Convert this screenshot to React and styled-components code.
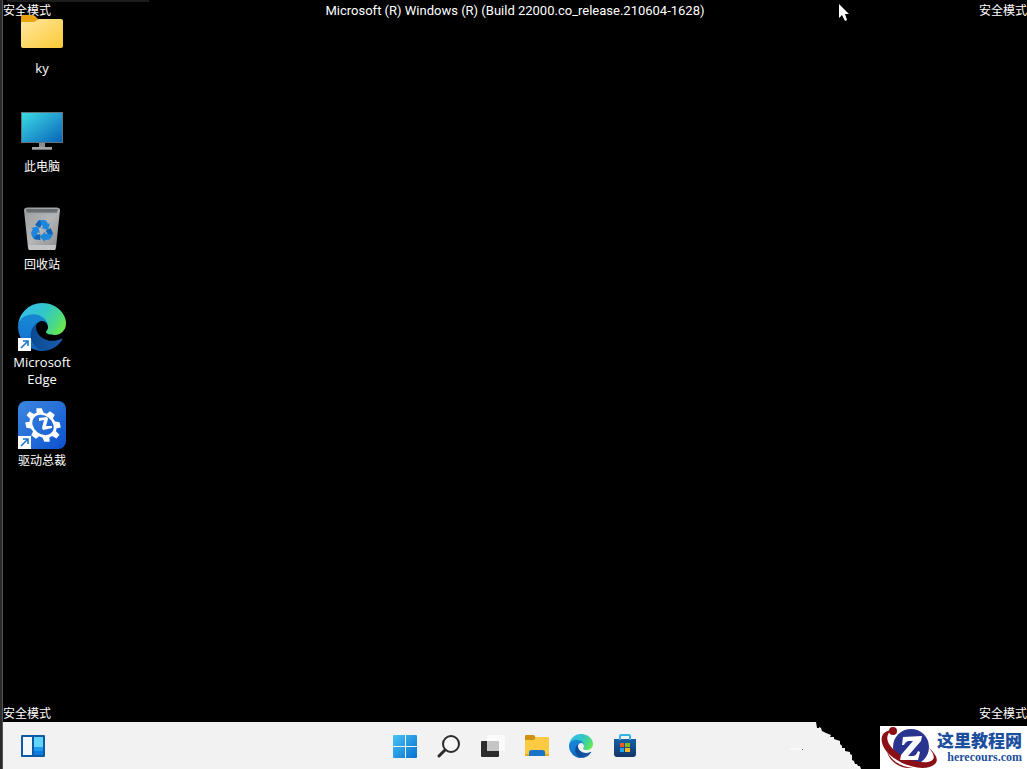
import React, { useId } from "react";
import styled, { createGlobalStyle } from "styled-components";

export default function App() {
  return (
    <>
      <GlobalStyle />
      <Screen>
        <Desktop>
          <TopStrip />
          <Watermark $top $left>安全模式</Watermark>
          <BuildInfo>Microsoft (R) Windows (R) (Build 22000.co_release.210604-1628)</BuildInfo>
          <Watermark $top>安全模式</Watermark>
          <Watermark $left>安全模式</Watermark>
          <Watermark>安全模式</Watermark>
          <ShortcutGrid>
            {shortcuts.map(({ name, Icon, linked, latin }) => (
              <Shortcut key={name} type="button">
                <IconBox>
                  <Icon />
                  {linked && <ShortcutArrow />}
                </IconBox>
                <ShortcutLabel $latin={latin}>{name}</ShortcutLabel>
              </Shortcut>
            ))}
          </ShortcutGrid>
          <Pointer />
        </Desktop>
        <Taskbar>
          <TaskbarStart>
            <TaskButton type="button" aria-label="Widgets"><WidgetsIcon /></TaskButton>
          </TaskbarStart>
          <TaskbarApps>
            {apps.map(({ name, Icon }) => (
              <TaskButton key={name} type="button" aria-label={name}><Icon /></TaskButton>
            ))}
          </TaskbarApps>
          <TaskbarEnd>
            <Speck />
            <TornEdge />
            <BrandArea>
              <Brand href="#">
                <BrandLogo />
                <BrandText>
                  <BrandName>这里教程网</BrandName>
                  <BrandDomain>herecours.com</BrandDomain>
                </BrandText>
              </Brand>
            </BrandArea>
          </TaskbarEnd>
        </Taskbar>
      </Screen>
    </>
  );
}

/* Icons */

function FolderIcon() {
  return (
    <svg width="48" height="48" viewBox="0 0 48 48" aria-hidden="true">
      <defs>
        <linearGradient id="folder" x1="0" y1="0" x2="1" y2="1">
          <stop offset="0" stopColor="#ffe8a0" />
          <stop offset="1" stopColor="#fbc936" />
        </linearGradient>
      </defs>
      <path d="M3 13V8q0-2 2-2h9q2 0 3 1l3 3v6H3z" fill="#e9a410" />
      <path d="M3 14q0-1 1-1h11q2 0 3-1l1-1q1-1 2-1h22q2 0 2 2v25q0 2-2 2H5q-2 0-2-2z" fill="url(#folder)" />
    </svg>
  );
}

function ComputerIcon() {
  return (
    <svg width="48" height="48" viewBox="0 0 48 48" aria-hidden="true">
      <defs>
        <linearGradient id="monitor" x1="0" y1="0" x2="1" y2="1">
          <stop offset="0" stopColor="#38dbe2" />
          <stop offset="0.5" stopColor="#239fd0" />
          <stop offset="1" stopColor="#0864b8" />
        </linearGradient>
      </defs>
      <path d="M3 5h42v31H3z" fill="#62757d" />
      <path d="M4 6h40v29H4z" fill="url(#monitor)" />
      <path d="M21 36h6v5h-6z" fill="#8b9094" />
      <path d="M14 40h20v2H14z" fill="#a2a5a7" />
      <path d="M14 42h20v1H14z" fill="#777" />
    </svg>
  );
}

function RecycleIcon() {
  return (
    <svg width="48" height="48" viewBox="0 0 48 48" aria-hidden="true">
      <defs>
        <linearGradient id="bin" x1="0" y1="0" x2="1" y2="1">
          <stop offset="0" stopColor="#9a9c9d" />
          <stop offset="0.5" stopColor="#b4b6b7" />
          <stop offset="1" stopColor="#858788" />
        </linearGradient>
      </defs>
      <path d="M6 5q0-2 2-2h32q2 0 2 2l-4 38q0 2-2 2H12q-2 0-2-2z" fill="url(#bin)" />
      <path d="M8 4h32l-1 4H9z" fill="#6a6e70" />
      <path d="M7 5q0-2 2-2h30q2 0 2 2M9 8h30" fill="none" stroke="#9da1a3" />
      <path d="M10 40h28l-1 5H11z" fill="#c1c3c4" />
      {[0, 120, 240].map(angle => (
        <g key={angle} transform={`rotate(${angle} 24 26)`}>
          <path d="m17 20 3-4q1-1 2-1h4l-4 8z" fill="#0c66b9" />
          <path d="M22 15h4q2 0 3 2l1 2 2-1-2 7-7-2 2-1-3-6z" fill="#1c86da" />
        </g>
      ))}
    </svg>
  );
}

function EdgeIcon({ size = 48 }) {
  const id = useId();
  return (
    <svg width={size} height={size} viewBox="0 0 256 256" aria-hidden="true">
      <defs>
        <linearGradient id={`${id}a`} x1="0" y1="0" x2="1" y2="0">
          <stop offset="0.1" stopColor="#0b4a93" />
          <stop offset="1" stopColor="#1a5dae" />
        </linearGradient>
        <linearGradient id={`${id}b`} x1="0.5" y1="0" x2="0.5" y2="1">
          <stop offset="0" stopColor="#168bd2" />
          <stop offset="0.6" stopColor="#1479d3" />
          <stop offset="1" stopColor="#125dae" />
        </linearGradient>
        <linearGradient id={`${id}c`} x1="0" y1="0.2" x2="1" y2="0.6">
          <stop offset="0" stopColor="#35bdea" />
          <stop offset="0.5" stopColor="#32c6c9" />
          <stop offset="0.8" stopColor="#48d889" />
          <stop offset="1" stopColor="#69e650" />
        </linearGradient>
      </defs>
      <g transform="translate(-4.63 -4.92)">
        <path fill={`url(#${id}a)`} d="M235.68 195.46a93.73 93.73 0 0 1-10.54 4.71 101.87 101.87 0 0 1-35.9 6.46c-47.32 0-88.54-32.55-88.54-74.32A31.48 31.48 0 0 1 117.13 105c-42.8 1.8-53.8 46.4-53.8 72.53 0 73.88 68.09 81.37 82.76 81.37 7.91 0 19.84-2.3 27-4.56l1.31-.44a128.34 128.34 0 0 0 66.6-52.8 4 4 0 0 0-5.32-5.64Z" />
        <path fill={`url(#${id}b)`} d="M110.34 246.34A79.2 79.2 0 0 1 87.6 225a80.72 80.72 0 0 1 29.53-120c3.12-1.47 8.45-4.13 15.54-4a32.35 32.35 0 0 1 25.69 13 31.88 31.88 0 0 1 6.36 18.66c0-.21 24.46-79.6-80-79.6-43.9 0-80 41.66-80 78.21a130.15 130.15 0 0 0 12.11 56 128 128 0 0 0 156.38 67.11 75.55 75.55 0 0 1-62.78-8Z" />
        <path fill={`url(#${id}c)`} d="M156.94 153.78c-.81 1.05-3.3 2.5-3.3 5.66 0 2.61 1.7 5.12 4.72 7.23 14.38 10 41.49 8.68 41.56 8.68a59.56 59.56 0 0 0 30.27-8.35A61.38 61.38 0 0 0 260.63 114c.26-22.41-8-37.31-11.34-43.91C228.09 28.76 182.35 5 132.63 5a128 128 0 0 0-128 126.2c.48-36.54 36.8-66.05 80-66.05 3.5 0 23.46.34 42 10.07 16.34 8.58 24.9 18.94 30.85 29.21 6.18 10.67 7.28 24.15 7.28 29.52s-2.74 13.33-7.8 19.83Z" />
      </g>
    </svg>
  );
}

function DriverIcon() {
  return (
    <svg width="48" height="48" viewBox="0 0 48 48" aria-hidden="true">
      <defs>
        <linearGradient id="driver" x1="0" y1="0" x2="1" y2="1">
          <stop offset="0" stopColor="#3c86e0" />
          <stop offset="0.5" stopColor="#256fd8" />
          <stop offset="1" stopColor="#0c50ce" />
        </linearGradient>
      </defs>
      <rect width="48" height="48" rx="8" fill="url(#driver)" />
      {/* eight teeth around a tilted ring */}
      <g transform="rotate(38 25 24) translate(25 24) scale(1 .8)" fill="#fff">
        {[0, 45, 90, 135, 180, 225, 270, 315].map(angle => (
          <path key={angle} transform={`rotate(${angle})`} d="M-4-13-3-19h6l1 6z" />
        ))}
        <circle r="13" fill="none" stroke="#fff" strokeWidth="3" />
      </g>
      <path d="m21 17 8-1 1 2-2 7h6v2l-9 2-1-2 2-8-5 1z" fill="#fff" />
    </svg>
  );
}

function ShortcutArrow() {
  return (
    <Badge width="13" height="13" viewBox="0 0 13 13" aria-hidden="true">
      <path d="M0 0h13v13H0z" fill="#fff" />
      <path d="m3 10 6-6M5 3h5v5" fill="none" stroke="#1673c8" strokeWidth="1.5" />
    </Badge>
  );
}

function WidgetsIcon() {
  return (
    <svg width="24" height="22" viewBox="0 0 24 22" aria-hidden="true">
      <rect width="24" height="22" rx="1" fill="#0e5ba3" />
      <path d="M2 2h9v18H2z" fill="#f4f8fb" />
      <path d="M13 2h9v10h-9z" fill="#63d4fb" />
      <path d="M13 12h9v4h-9z" fill="#1c99ef" />
      <path d="M13 16h9v4h-9z" fill="#0b7be2" />
    </svg>
  );
}

function StartIcon() {
  return (
    <svg width="24" height="24" viewBox="0 0 24 24" aria-hidden="true">
      <defs>
        <linearGradient id="start" gradientUnits="userSpaceOnUse" x1="0" y1="0" x2="24" y2="24">
          <stop offset="0" stopColor="#49c6f5" />
          <stop offset="1" stopColor="#056fd0" />
        </linearGradient>
      </defs>
      <path d="M1 1h11v11H0V2q0-1 1-1zM13 1h10q1 0 1 1v10H13zM0 13h12v11H1q-1 0-1-1zM13 13h11v10q0 1-1 1H13z" fill="url(#start)" />
    </svg>
  );
}

function SearchIcon() {
  return (
    <svg width="24" height="24" viewBox="0 0 24 24" aria-hidden="true">
      <circle cx="14" cy="10" r="8" fill="#f7f7f7" stroke="#2b2b2b" strokeWidth="2" />
      <path d="m8 16-6 6" stroke="#2b2b2b" strokeWidth="3" strokeLinecap="round" />
    </svg>
  );
}

function TaskViewIcon() {
  return (
    <svg width="24" height="24" viewBox="0 0 24 24" aria-hidden="true">
      <rect x="0" y="7" width="18" height="16" rx="1" fill="#2c2c2c" />
      <rect x="6" y="1" width="18" height="16" rx="1" fill="#fbfbfb" />
      <path d="M6 7h12v10H7q-1 0-1-1z" fill="#c5c5c5" />
    </svg>
  );
}

function ExplorerIcon() {
  return (
    <svg width="24" height="24" viewBox="0 0 24 24" aria-hidden="true">
      <path d="M0 6V2q0-1 1-1h8l2 3v3H0z" fill="#cf9113" />
      <path d="M0 6h9l2-3h12q1 0 1 1v17q0 1-1 1H1q-1 0-1-1z" fill="#fccb41" />
      <path d="M0 20h24v1q0 1-1 1H1q-1 0-1-1z" fill="#eaa918" />
      <path d="M4 22v-4q0-2 3-2h10q3 0 3 2v4z" fill="#1873c8" />
    </svg>
  );
}

function TaskEdgeIcon() {
  return <EdgeIcon size={24} />;
}

function StoreIcon() {
  return (
    <svg width="24" height="24" viewBox="0 0 24 24" aria-hidden="true">
      <defs>
        <linearGradient id="store" x1="0" y1="0" x2="0" y2="1">
          <stop offset="0" stopColor="#1661a4" />
          <stop offset="1" stopColor="#143468" />
        </linearGradient>
      </defs>
      <path d="M1 5h22v15q0 3-3 3H4q-3 0-3-3z" fill="url(#store)" />
      <path d="M7 6V2q0-1 1-1h8q1 0 1 1v4" fill="none" stroke="#31b5e9" strokeWidth="2" />
      <path d="M7 9h4v4H7z" fill="#ef5828" />
      <path d="M12 9h5v4h-5z" fill="#81b91f" />
      <path d="M7 14h4v4H7z" fill="#20a3ed" />
      <path d="M12 14h5v4h-5z" fill="#fbb814" />
    </svg>
  );
}

function Speck() {
  return (
    <SpeckSvg width="14" height="3" viewBox="0 0 14 3" aria-hidden="true">
      <path d="M0 1h12" stroke="#fff" />
      <path d="M12 1h1v1h-1z" fill="#3f6d97" />
    </SpeckSvg>
  );
}

function TornEdge() {
  return (
    <svg width="46" height="47" viewBox="0 0 46 47" aria-hidden="true">
      <path d="M0 0h46v47h-1l-1-3h-2l-1-2h-2l-1-3-2-1v-5l-2-1v-2l-5-1v-3h-3v-2l-2-2v-3l-6-2v-2h-4l1-2-5-2-4-2-1-3-2-1V6H1z" fill="#000" />
    </svg>
  );
}

function BrandLogo() {
  return (
    <svg width="57" height="43" viewBox="0 0 57 43" aria-hidden="true">
      <circle cx="31" cy="21" r="18" fill="#29348f" />
      <path d="M12 5C2 8 5 20 15 29c11 9 27 13 36 9 5-3 4-7-1-13" fill="none" stroke="#fff" strokeWidth="4" />
      <path d="M12 4C-2 5-1 19 10 29c14 12 36 17 45 9 4-4 1-10-6-16 6 7 6 11 2 13-8 4-28-2-38-12C5 15 6 8 12 4z" fill="#8b0f16" />
      <path d="M7 26c5 9 14 15 26 16C20 43 10 36 7 26z" fill="#8b0f16" />
      <circle cx="13" cy="5" r="4" fill="#8b0f16" />
      <path d="m23 11 19-1-1 5-13 15h5q3 0 5-5l2 1-2 8H20l1-5 12-14h-4q-3 0-5 4h-2z" fill="#fff" />
    </svg>
  );
}

function Pointer() {
  return (
    <PointerSvg width="12" height="18" viewBox="0 0 12 18" aria-hidden="true">
      <path d="M0 0v14l3-3 3 6 2-1-2-6h4z" fill="#fff" />
    </PointerSvg>
  );
}

const shortcuts = [
  { name: "ky", Icon: FolderIcon, latin: true },
  { name: "此电脑", Icon: ComputerIcon },
  { name: "回收站", Icon: RecycleIcon },
  { name: "Microsoft Edge", Icon: EdgeIcon, linked: true, latin: true },
  { name: "驱动总裁", Icon: DriverIcon, linked: true },
];

const apps = [
  { name: "Start", Icon: StartIcon },
  { name: "Search", Icon: SearchIcon },
  { name: "Task View", Icon: TaskViewIcon },
  { name: "File Explorer", Icon: ExplorerIcon },
  { name: "Microsoft Edge", Icon: TaskEdgeIcon },
  { name: "Microsoft Store", Icon: StoreIcon },
];

const GlobalStyle = createGlobalStyle`
  * {
    box-sizing: border-box;
  }

  body {
    margin: 0;
    background: #000;
    font-family: "Open Sans", "Noto Sans CJK SC", sans-serif;
    font-size: 12px;
    line-height: 17px;
    color: #fff;
  }

  button {
    padding: 0;
    border: 0;
    background: none;
    color: inherit;
    font: inherit;
  }

  svg {
    display: block;
    flex: none;
  }
`;

const Screen = styled.div`
  display: flex;
  flex-direction: column;
  min-height: 100vh;
  border-left: 2px solid #2a2a2a;
  box-shadow: inset 1px 0 #555;
  padding-left: 1px;
`;

const Desktop = styled.main`
  position: relative;
  flex: 1;
  padding-top: 9px;
`;

const TopStrip = styled.div`
  position: absolute;
  top: 0;
  left: 4px;
  width: 142px;
  height: 2px;
  background: #1c1c1c;
`;

const Watermark = styled.span`
  position: absolute;
  ${({ $top }) => ($top ? "top: 2px;" : "bottom: 0;")}
  ${({ $left }) => ($left ? "left: 0;" : "right: 0;")}
`;

const BuildInfo = styled.div`
  position: absolute;
  top: 2px;
  left: 0;
  right: 0;
  text-align: center;
  font-family: Roboto, sans-serif;
  font-size: 13px;
`;

const ShortcutGrid = styled.div`
  display: grid;
  grid-template-columns: 78px;
  grid-auto-rows: 98px;
`;

const Shortcut = styled.button`
  display: flex;
  flex-direction: column;
  align-items: center;
  gap: 3px;
`;

const IconBox = styled.span`
  position: relative;
`;

const Badge = styled.svg`
  position: absolute;
  left: 0;
  bottom: 0;
`;

const ShortcutLabel = styled.span`
  max-width: 64px;
  text-align: center;
  font-size: ${({ $latin }) => ($latin ? "13px" : "12px")};
`;

const PointerSvg = styled.svg`
  position: absolute;
  top: 4px;
  left: 836px;
`;

const Taskbar = styled.footer`
  display: grid;
  grid-template-columns: 1fr auto 1fr;
  height: 47px;
  background: #f2f2f2;
`;

const TaskbarStart = styled.div`
  display: flex;
  padding-left: 8px;
`;

const TaskbarApps = styled.nav`
  display: flex;
`;

const TaskButton = styled.button`
  display: grid;
  place-items: center;
  width: 44px;
`;

const TaskbarEnd = styled.div`
  display: flex;
  justify-content: flex-end;
`;

const SpeckSvg = styled.svg`
  align-self: center;
  margin: 8px 12px 0 0;
`;

const BrandArea = styled.div`
  display: flex;
  align-items: flex-end;
  padding-left: 18px;
  background: #000;
`;

const Brand = styled.a`
  display: flex;
  width: 147px;
  height: 43px;
  background: #fff;
  color: #1d4f9f;
  text-decoration: none;
`;

const BrandText = styled.span`
  display: flex;
  flex-direction: column;
  align-items: flex-end;
  padding-top: 4px;
`;

const BrandName = styled.span`
  font: 900 17px/20px "Noto Sans CJK SC", sans-serif;
`;

const BrandDomain = styled.span`
  font: bold 12px/15px "Liberation Serif", serif;
`;
